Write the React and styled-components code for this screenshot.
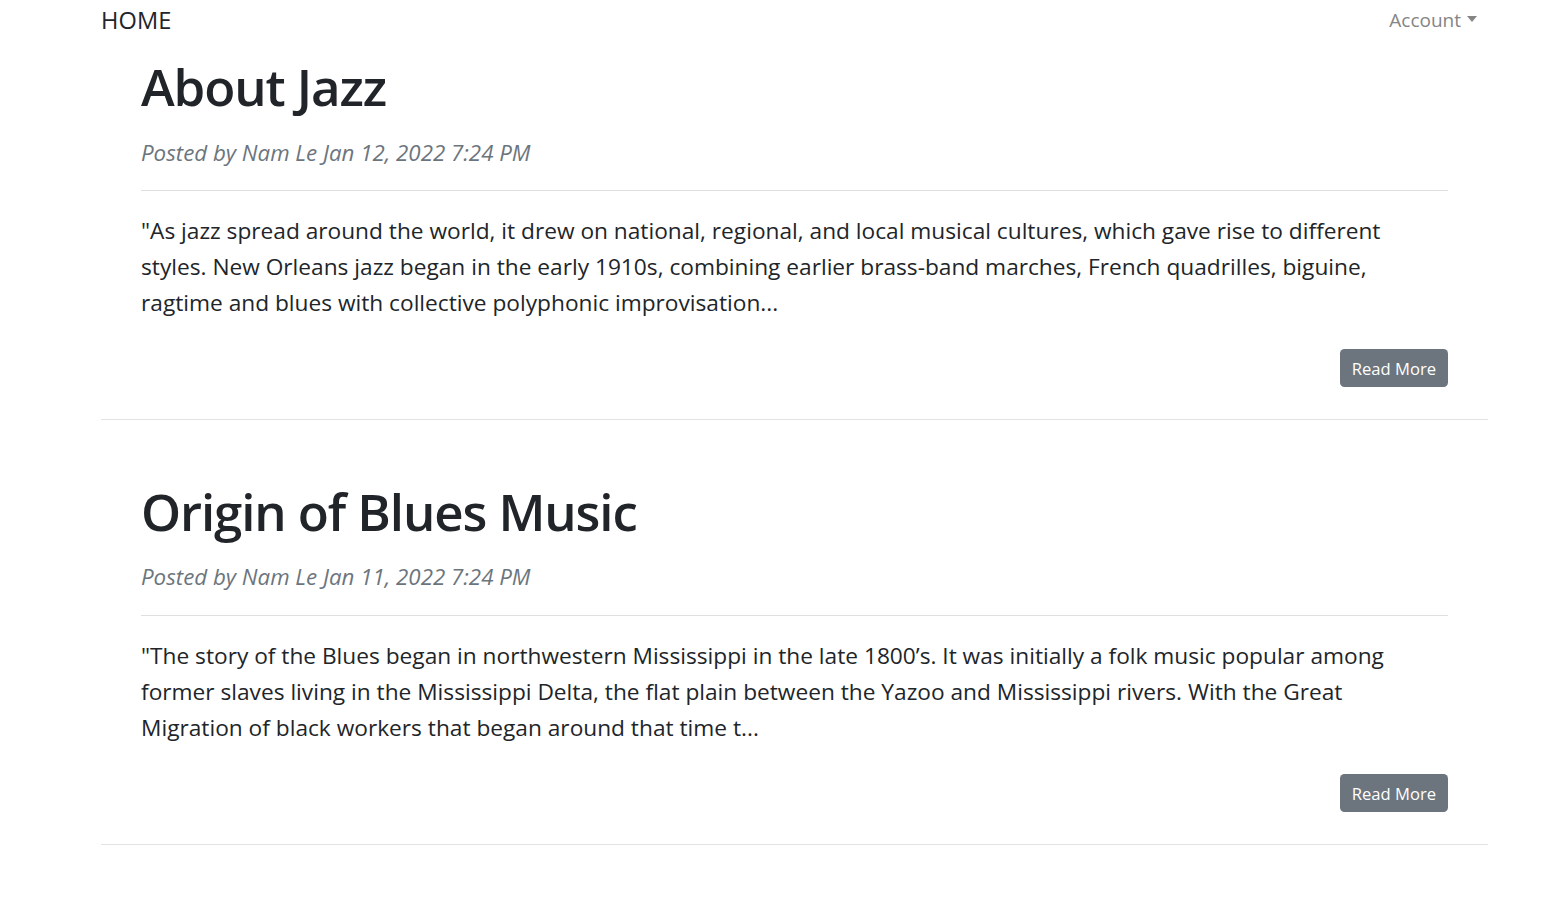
import React from 'react';
import styled, { createGlobalStyle } from 'styled-components';

const GlobalStyle = createGlobalStyle`
  html, body { margin: 0; padding: 0; background: #fff; }
  body {
    font-family: "Open Sans", "Noto Sans", sans-serif;
    color: #212529;
    -webkit-font-smoothing: antialiased;
  }
  * { box-sizing: border-box; }
`;

const Page = styled.div`
  padding: 0 64px 40px 101px;
`;

const Navbar = styled.nav`
  display: flex;
  align-items: center;
  justify-content: space-between;
  height: 40px;
`;

const Brand = styled.a`
  font-size: 23.6px;
  line-height: 42px;
  color: #212529;
  text-decoration: none;
  letter-spacing: 0.1px;
`;

const AccountToggle = styled.a`
  display: flex;
  align-items: center;
  gap: 6px;
  padding-right: 11px;
  font-size: 19px;
  line-height: 42px;
  color: #858585;
  text-decoration: none;
`;

const Caret = styled.span`
  width: 0;
  height: 0;
  border-top: 6px solid #858585;
  border-left: 5px solid transparent;
  border-right: 5px solid transparent;
  margin-top: -2px;
`;

const PostList = styled.main`
  display: flex;
  flex-direction: column;
  gap: 61px;
  padding-top: 16.3px;
`;

const Post = styled.article`
  display: flex;
  flex-direction: column;
  padding: 0 40px 31.5px;
  border-bottom: 1px solid #e3e3e3;
`;

const Title = styled.h2`
  margin: 0;
  font-size: 51px;
  line-height: 61.2px;
  font-weight: 600;
  letter-spacing: -1.1px;
  color: #212529;
`;

const Meta = styled.p`
  margin: 18.3px 0 0;
  font-size: 22.3px;
  line-height: 34px;
  font-style: italic;
  color: #6c757d;
`;

const Rule = styled.hr`
  margin: 20.2px 0 22.5px;
  border: 0;
  border-top: 1px solid #e0e0e0;
  height: 0;
`;

const Excerpt = styled.p`
  margin: 0;
  font-size: 22.7px;
  line-height: 36px;
  color: #212529;
`;

const Actions = styled.div`
  display: flex;
  justify-content: flex-end;
  margin-top: 28px;
`;

const ReadMore = styled.button`
  height: 38px;
  padding: 1px 12px 0;
  border: 0;
  border-radius: 4.5px;
  background: #6c757d;
  color: #fff;
  font-family: inherit;
  font-size: 16.6px;
  line-height: 37px;
  cursor: pointer;
`;

const posts = [
  {
    title: 'About Jazz',
    meta: 'Posted by Nam Le Jan 12, 2022 7:24 PM',
    text: '"As jazz spread around the world, it drew on national, regional, and local musical cultures, which gave rise to different styles. New Orleans jazz began in the early 1910s, combining earlier brass-band marches, French quadrilles, biguine, ragtime and blues with collective polyphonic improvisation...',
  },
  {
    title: 'Origin of Blues Music',
    meta: 'Posted by Nam Le Jan 11, 2022 7:24 PM',
    text: '"The story of the Blues began in northwestern Mississippi in the late 1800’s. It was initially a folk music popular among former slaves living in the Mississippi Delta, the flat plain between the Yazoo and Mississippi rivers. With the Great Migration of black workers that began around that time t...',
  },
];

export default function App() {
  return (
    <Page>
      <GlobalStyle />
      <Navbar>
        <Brand href="#">HOME</Brand>
        <AccountToggle href="#">
          Account
          <Caret />
        </AccountToggle>
      </Navbar>
      <PostList>
        {posts.map((p) => (
          <Post key={p.title}>
            <Title>{p.title}</Title>
            <Meta>{p.meta}</Meta>
            <Rule />
            <Excerpt>{p.text}</Excerpt>
            <Actions>
              <ReadMore type="button">Read More</ReadMore>
            </Actions>
          </Post>
        ))}
      </PostList>
    </Page>
  );
}
